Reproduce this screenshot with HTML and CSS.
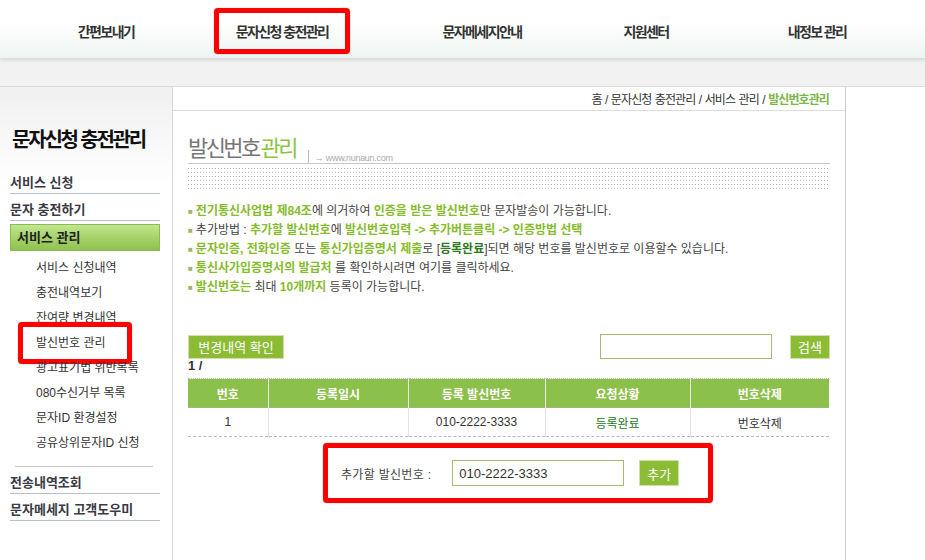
FILE: index.html
```html
<!DOCTYPE html>
<html lang="ko">
<head>
    <meta charset="UTF-8">
    <title>발신번호 관리</title>
    <link rel="stylesheet" href="styles.css">
</head>
<body>
    <header class="gnb">
        <nav class="gnb-menu">
            <div class="gnb-item"><a href="#">간편보내기</a></div>
            <div class="gnb-item"><a href="#" class="on">문자신청 충전관리</a></div>
            <div class="gnb-item"><a href="#">문자메세지안내</a></div>
            <div class="gnb-item"><a href="#">지원센터</a></div>
            <div class="gnb-item"><a href="#">내정보 관리</a></div>
        </nav>
    </header>
    <div class="band"></div>

    <div class="wrap">
        <aside class="lnb">
            <h2>문자신청 충전관리</h2>
            <ul class="lnb-menu">
                <li class="dep1"><a href="#">서비스 신청</a></li>
                <li class="dep1"><a href="#">문자 충전하기</a></li>
                <li class="dep1 open">
                    <a href="#" class="cur">서비스 관리</a>
                    <ul class="dep2">
                        <li><a href="#">서비스 신청내역</a></li>
                        <li><a href="#">충전내역보기</a></li>
                        <li><a href="#">잔여량 변경내역</a></li>
                        <li class="mark"><a href="#">발신번호 관리</a></li>
                        <li><a href="#">광고표기법 위반목록</a></li>
                        <li><a href="#">080수신거부 목록</a></li>
                        <li><a href="#">문자ID 환경설정</a></li>
                        <li><a href="#">공유상위문자ID 신청</a></li>
                    </ul>
                </li>
                <li class="dep1"><a href="#">전송내역조회</a></li>
                <li class="dep1"><a href="#">문자메세지 고객도우미</a></li>
            </ul>
        </aside>

        <main class="content">
            <div class="location">홈 / 문자신청 충전관리 / 서비스 관리 / <strong>발신번호관리</strong></div>

            <div class="inner">
                <div class="tit">
                    <h3>발신번호<em>관리</em></h3>
                    <span class="url">→ www.nunaun.com</span>
                </div>
                <div class="dots"></div>

                <ul class="notice">
                    <li><b>전기통신사업법 제84조</b>에 의거하여 <b>인증을 받은 발신번호</b>만 문자발송이 가능합니다.</li>
                    <li>추가방법 : <b>추가할 발신번호</b>에 <b>발신번호입력 -&gt; 추가버튼클릭 -&gt; 인증방법 선택</b></li>
                    <li><b>문자인증, 전화인증</b> 또는 <b>통신가입증명서 제출</b>로 [<b class="done">등록완료</b>]되면 해당 번호를 발신번호로 이용할수 있습니다.</li>
                    <li><b>통신사가입증명서의 발급처</b> 를 확인하시려면 여기를 클릭하세요.</li>
                    <li><b>발신번호는</b> 최대 <b>10개까지</b> 등록이 가능합니다.</li>
                </ul>

                <div class="toolbar">
                    <button class="btn btn-log">변경내역 확인</button>
                    <div class="search">
                        <input type="text" class="search-input">
                        <button class="btn btn-search">검색</button>
                    </div>
                </div>
                <p class="page">1 /</p>

                <table class="list">
                    <thead>
                        <tr>
                            <th class="c-no">번호</th>
                            <th class="c-date">등록일시</th>
                            <th class="c-num">등록 발신번호</th>
                            <th class="c-state">요청상황</th>
                            <th class="c-del">번호삭제</th>
                        </tr>
                    </thead>
                    <tbody>
                        <tr>
                            <td>1</td>
                            <td></td>
                            <td>010-2222-3333</td>
                            <td class="ok">등록완료</td>
                            <td>번호삭제</td>
                        </tr>
                    </tbody>
                </table>

                <div class="add-box">
                    <label for="addnum">추가할 발신번호 :</label>
                    <input type="text" id="addnum" class="add-input" value="010-2222-3333">
                    <button class="btn btn-add">추가</button>
                </div>
            </div>
        </main>
    </div>
</body>
</html>
```
FILE: styles.css
```css
*,
*::before,
*::after {
    box-sizing: border-box;
}

body {
    margin: 0;
    background-color: #fff;
    font-family: "Liberation Sans", "Noto Sans CJK KR", sans-serif;
    font-size: 12px;
    color: #444;
}

a {
    color: inherit;
    text-decoration: none;
}

ul {
    list-style: none;
    margin: 0;
    padding: 0;
}

/* top menu */
.gnb {
    position: relative;
    height: 58px;
    background: linear-gradient(#fff, #fff 40%, #eef4f2);
    box-shadow: 0 2px 4px rgba(0, 0, 0, 0.12);
    z-index: 2;
}

.gnb-menu {
    display: grid;
    grid-template-columns: 132px 220px 180px 148px 194px;
    padding-left: 40px;
    height: 100%;
}

.gnb-item {
    display: flex;
    justify-content: center;
    align-items: center;
    padding-top: 3px;
}

.gnb-item a {
    font-family: "Noto Sans CJK KR", sans-serif;
    font-size: 14px;
    font-weight: bold;
    letter-spacing: -1.6px;
    color: #333;
}

.gnb-item a.on {
    display: flex;
    justify-content: center;
    align-items: center;
    width: 136px;
    height: 46px;
    border: 5px solid #f00;
    border-radius: 4px;
    box-shadow: 0 0 1px #555;
}

.band {
    height: 29px;
    background-color: #f2f2f2;
    border-bottom: 1px solid #dcdcdc;
}

/* layout */
.wrap {
    display: flex;
    align-items: stretch;
    min-height: 480px;
}

/* left menu */
.lnb {
    width: 173px;
    flex-shrink: 0;
    padding: 40px 12px 0 10px;
    background: linear-gradient(#f0f0f0, #fff 100px);
    border-right: 1px solid #d8d8d8;
}

.lnb h2 {
    margin: 0 0 16px 2px;
    font-family: "Noto Sans CJK KR", sans-serif;
    font-size: 20px;
    line-height: 24px;
    letter-spacing: -2.2px;
    color: #111;
}

.dep1 > a {
    display: block;
    padding-top: 6px;
    line-height: 20px;
    font-size: 13px;
    font-weight: bold;
    color: #3a3a44;
    border-bottom: 1px solid #b9c0cc;
}

.dep1 > a.cur {
    margin-top: 3px;
    padding: 0 0 0 6px;
    line-height: 25px;
    background: linear-gradient(#c0e68f, #a5d36a 50%, #8fc24f);
    border: 1px solid #8cbc50;
    color: #222;
}

.dep2 {
    margin: 0 7px 0 5px;
    padding: 5px 0 10px;
    border-bottom: 1px solid #c4c4c4;
}

.dep2 li {
    position: relative;
    line-height: 25px;
    padding-left: 21px;
}

.dep2 a {
    font-size: 12px;
    color: #333;
}

.dep2 li.mark::after {
    content: "";
    position: absolute;
    left: 3px;
    top: -9px;
    width: 114px;
    height: 42px;
    border: 5px solid #f00;
    border-radius: 4px;
    box-shadow: 0 0 1px #555;
}

/* content */
.content {
    width: 673px;
    flex-shrink: 0;
    border-right: 1px solid #ccc;
}

.location {
    height: 24px;
    padding: 3px 16px 0 0;
    text-align: right;
    font-size: 12px;
    letter-spacing: -0.9px;
    word-spacing: 1px;
    color: #333;
    border-bottom: 1px solid #ddd;
}

.location strong {
    color: #7ab648;
}

.inner {
    padding: 0 15px 0 15px;
}

.tit {
    display: flex;
    align-items: flex-end;
    padding-top: 21px;
    padding-bottom: 3px;
    border-bottom: 1px solid #c8c8c8;
}

.tit h3 {
    margin: 0;
    font-family: "Noto Sans CJK KR", sans-serif;
    font-size: 22px;
    font-weight: normal;
    line-height: 28px;
    letter-spacing: -2.6px;
    color: #777;
}

.tit h3 em {
    font-style: normal;
    color: #8cc43f;
    margin-left: 2px;
}

.url {
    margin: 0 0 -3px 12px;
    padding: 3px 0 0 6px;
    border-left: 1px solid #bbb;
    font-size: 9px;
    line-height: 10px;
    color: #aaa;
    letter-spacing: -0.3px;
}

.dots {
    height: 21px;
    margin-top: 4px;
    background-image: radial-gradient(circle at 0.5px 0.5px, #b5b5b5 0.7px, transparent 0.8px);
    background-size: 3px 4px;
}

.notice {
    margin-top: 13px;
}

.notice li {
    line-height: 18px;
    font-size: 12px;
    color: #444;
    white-space: nowrap;
}

.notice li::before {
    content: "■";
    font-size: 8px;
    color: #9cb86a;
    margin-right: 3px;
    vertical-align: 1px;
}

.notice b {
    color: #86bc2c;
}

.notice b.done {
    color: #2a7a22;
}

/* list tools */
.toolbar {
    display: flex;
    justify-content: space-between;
    align-items: center;
    margin-top: 37px;
}

.btn {
    height: 24px;
    padding: 0 6px;
    font-family: "Noto Sans CJK KR", sans-serif;
    font-size: 13px;
    color: #fff;
    background-color: #8cbc34;
    border: 1px solid #cfe0b0;
    cursor: pointer;
}

.btn-log {
    width: 96px;
}

.search {
    display: flex;
    align-items: center;
    gap: 18px;
}

.search-input {
    width: 172px;
    height: 25px;
    border: 1px solid #9fbd6c;
}

.btn-search {
    width: 40px;
    padding: 0;
}

.page {
    margin: 0;
    height: 19px;
    line-height: 14px;
    font-size: 13px;
    font-weight: bold;
    color: #333;
}

/* table */
.list {
    width: 641px;
    border-collapse: collapse;
    text-align: center;
}

.list th {
    height: 29px;
    font-size: 12px;
    color: #fff;
    background-color: #8bc04b;
    border-top: 1px dotted #bbb;
    border-bottom: 1px dotted #aaa;
    border-left: 1px solid #e8e8e8;
}

.list th:first-child,
.list td:first-child {
    border-left: 0;
}

.list td {
    height: 29px;
    font-size: 12px;
    color: #333;
    border-bottom: 1px dashed #bbb;
    border-left: 1px solid #e3e3e3;
}

.list td.ok {
    color: #237a1e;
}

.c-no { width: 80px; }
.c-date { width: 140px; }
.c-num { width: 137px; }
.c-state { width: 145px; }

/* add number */
.add-box {
    display: flex;
    align-items: center;
    width: 390px;
    height: 60px;
    margin: 6px 0 0 135px;
    padding: 0 13px;
    border: 5px solid #f00;
    border-radius: 4px;
    box-shadow: 0 0 1px #555;
}

.add-box label {
    font-size: 12px;
    color: #444;
    letter-spacing: 0.3px;
}

.add-input {
    width: 172px;
    height: 26px;
    margin-left: 21px;
    padding: 0 6px;
    font-family: "Liberation Sans", sans-serif;
    font-size: 13px;
    color: #333;
    border: 1px solid #9fbd6c;
}

.btn-add {
    width: 40px;
    height: 26px;
    margin-left: 15px;
    padding: 0;
}
```
